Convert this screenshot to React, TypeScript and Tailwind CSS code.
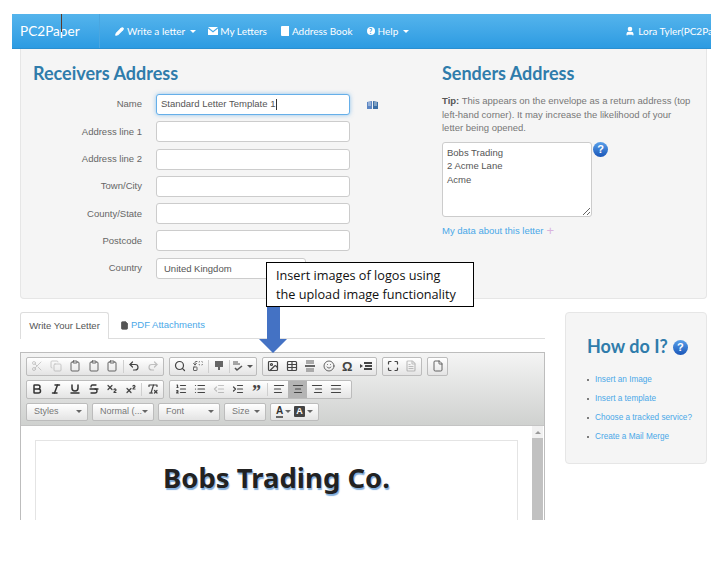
import React from 'react';
import {
  Pencil, User, Scissors, Copy, Clipboard, Undo2, Redo2, Search, Replace,
  Image, Table, Smile, Maximize, File, FileText,
  Bold, Italic, Underline, Strikethrough, Subscript, Superscript, RemoveFormatting,
  ListOrdered, List, IndentDecrease, IndentIncrease, AlignLeft, AlignCenter, AlignRight, AlignJustify,
} from 'lucide-react';

const Caret = ({ className = 'border-t-white' }: { className?: string }) => (
  <span className={`inline-block w-0 h-0 border-x-[3px] border-x-transparent border-t-[3px] ${className}`} />
);

function HelpDot({ className = '' }: { className?: string }) {
  return (
    <span className={`flex w-[15px] h-[15px] shrink-0 items-center justify-center rounded-full bg-gradient-to-b from-[#5aa0ea] to-[#1a56b8] text-[11px] font-bold leading-none text-white ${className}`}>
      ?
    </span>
  );
}

function Btn({ children, active, dim }: { children: React.ReactNode; active?: boolean; dim?: boolean }) {
  return (
    <span className={`flex h-full w-[19px] items-center justify-center ${active ? 'bg-[#b4b4b4]' : ''} ${dim ? 'opacity-30' : ''}`}>
      {children}
    </span>
  );
}

const Sep = () => <span className="mx-[1px] h-[13px] w-px bg-[#cfcfcf]" />;

function Group({ children, className = '' }: { children: React.ReactNode; className?: string }) {
  return (
    <div className={`flex h-full items-center rounded-[2px] border border-[#bcbcbc] bg-gradient-to-b from-white to-[#e4e4e4] px-[1px] ${className}`}>
      {children}
    </div>
  );
}

function Combo({ label, width }: { label: string; width: string }) {
  return (
    <div className={`flex h-full items-center justify-between rounded-[2px] border border-[#bcbcbc] bg-gradient-to-b from-white to-[#e4e4e4] pl-[7px] pr-[5px] text-[9px] text-[#777] ${width}`}>
      <span>{label}</span>
      <Caret className="border-t-[#666]" />
    </div>
  );
}

const ic = { size: 12, strokeWidth: 2.4, color: '#444' };
const icLight = { size: 12, strokeWidth: 1.8, color: '#555' };

function Toolbar() {
  return (
    <div className="flex h-[73px] flex-col gap-[4px] border-b border-[#c4c4c4] bg-gradient-to-b from-[#f4f4f4] to-[#cfd1cf] px-[5px] pt-[4px] pb-[4px]">
      <div className="flex h-[19px] gap-[5px]">
        <Group className="w-[138px]">
          <Btn dim><Scissors {...icLight} /></Btn>
          <Btn dim><Copy {...icLight} /></Btn>
          <Btn><Clipboard {...icLight} /></Btn>
          <Btn><Clipboard {...icLight} /></Btn>
          <Btn><Clipboard {...icLight} /></Btn>
          <Sep />
          <Btn><Undo2 {...ic} /></Btn>
          <Btn dim><Redo2 {...ic} /></Btn>
        </Group>
        <Group className="w-[88px]">
          <Btn><Search {...ic} /></Btn>
          <Btn><Replace {...icLight} /></Btn>
          <Sep />
          <Btn>
            <svg width="12" height="12" viewBox="0 0 12 12" fill="#666">
              <path d="M2 1h8v6H7v3H5V7H2z" />
            </svg>
          </Btn>
          <Sep />
          <span className="flex w-[26px] items-center justify-center gap-[2px]">
            <svg width="13" height="12" viewBox="0 0 13 12" fill="none" stroke="#555">
              <path d="M1 4h7M1 2h5" strokeWidth="1" />
              <path d="M3 8l2 2 5-4" strokeWidth="1.6" />
            </svg>
            <Caret className="border-t-[#555]" />
          </span>
        </Group>
        <Group className="w-[115px]">
          <Btn><Image {...ic} /></Btn>
          <Btn><Table {...ic} /></Btn>
          <Btn>
            <svg width="12" height="12" viewBox="0 0 12 12">
              <path d="M2 0h8v4H2zM2 8h8v4H2z" fill="#aaa" />
              <path d="M1 5h10v2H1z" fill="#666" />
            </svg>
          </Btn>
          <Btn><Smile {...icLight} /></Btn>
          <Btn><span className="text-[13px] font-bold leading-none text-[#444]">Ω</span></Btn>
          <Btn>
            <svg width="12" height="12" viewBox="0 0 12 12" fill="#444">
              <path d="M0 4l3 2-3 2zM4 2h8v2H4zM5 5h7v2H5zM4 8h8v2H4z" />
            </svg>
          </Btn>
        </Group>
        <Group className="w-[40px]">
          <Btn><Maximize {...ic} /></Btn>
          <Btn dim><FileText {...ic} /></Btn>
        </Group>
        <Group className="w-[21px]">
          <Btn><File {...icLight} /></Btn>
        </Group>
      </div>
      <div className="flex h-[19px] gap-[5px]">
        <Group className="w-[138px]">
          <Btn><Bold size={12} strokeWidth={3} color="#333" /></Btn>
          <Btn><Italic size={12} strokeWidth={3} color="#333" /></Btn>
          <Btn><Underline size={12} strokeWidth={3} color="#333" /></Btn>
          <Btn><Strikethrough size={12} strokeWidth={2.6} color="#333" /></Btn>
          <Btn><Subscript {...ic} /></Btn>
          <Btn><Superscript {...ic} /></Btn>
          <Sep />
          <Btn><RemoveFormatting {...ic} /></Btn>
        </Group>
        <Group className="w-[183px]">
          <Btn><ListOrdered {...ic} /></Btn>
          <Btn><List {...ic} /></Btn>
          <Btn dim><IndentDecrease {...ic} /></Btn>
          <Btn><IndentIncrease {...ic} /></Btn>
          <Btn><span className="mt-[5px] font-['Liberation_Serif',serif] text-[18px] font-bold leading-none text-[#444]">”</span></Btn>
          <Sep />
          <Btn><AlignLeft {...ic} /></Btn>
          <Btn active><AlignCenter {...ic} /></Btn>
          <Btn><AlignRight {...ic} /></Btn>
          <Btn><AlignJustify {...ic} /></Btn>
        </Group>
      </div>
      <div className="flex h-[19px] gap-[4px]">
        <Combo label="Styles" width="w-[62px]" />
        <Combo label="Normal (..." width="w-[62px]" />
        <Combo label="Font" width="w-[62px]" />
        <Combo label="Size" width="w-[42px]" />
        <Group className="w-[49px] justify-between px-[5px]">
          <span className="flex items-center gap-[2px]">
            <span className="border-b-2 border-[#666] text-[10px] font-bold leading-[10px] text-[#333]">A</span>
            <Caret className="border-t-[#666]" />
          </span>
          <span className="flex items-center gap-[2px]">
            <span className="flex h-[11px] w-[11px] items-center justify-center rounded-[1px] bg-[#444] text-[9px] font-bold text-white">A</span>
            <Caret className="border-t-[#666]" />
          </span>
        </Group>
      </div>
    </div>
  );
}

function Field({ label, value, width = 'w-[194px]' }: { label: string; value?: string; width?: string }) {
  return (
    <div className="flex h-[21px] items-center">
      <label className="w-[109px] text-right text-[9.5px] text-[#666]">{label}</label>
      <input
        readOnly
        value={value ?? ''}
        className={`ml-[14px] h-full rounded-[3px] border border-[#ccc] bg-white px-[7px] text-[9.5px] text-[#555] outline-none ${width}`}
      />
    </div>
  );
}

const headingCls = "font-['Lato',sans-serif] text-[18px] font-bold leading-[20px] text-[#2f7cab]";

export default function App() {
  return (
    <div className="relative h-[571px] w-[727px] overflow-hidden bg-white pt-[14px] font-['Liberation_Sans',Arial,sans-serif]">
      {/* navbar */}
      <nav className="relative z-10 ml-[12px] flex h-[35px] w-[699px] items-center overflow-hidden border-b border-[#2a8fd0] bg-gradient-to-b from-[#54b4ec] to-[#2b9be2] font-['Lato',sans-serif] text-[10px] text-white">
        <div className="flex h-full w-[88px] shrink-0 items-center border-r border-[#4aa6e0] pl-[8px] text-[13.6px]">PC2Paper</div>
        <div className="flex shrink-0 items-center gap-[3px] pl-[15px]">
          <Pencil size={9} strokeWidth={3} fill="white" /> Write a letter <Caret className="ml-[2px] border-t-white" />
        </div>
        <div className="flex shrink-0 items-center gap-[2px] pl-[12px]">
          <svg width="10" height="8" viewBox="0 0 10 8" fill="white">
            <path d="M0 0h10L5 4zM0 1.5V8h10V1.5L5 5.5z" />
          </svg>
          My Letters
        </div>
        <div className="flex shrink-0 items-center gap-[3px] pl-[14px]">
          <svg width="8" height="10" viewBox="0 0 8 10" fill="white">
            <path d="M1 0h7v10H1a1 1 0 0 1-1-1V1a1 1 0 0 1 1-1z" />
          </svg>
          Address Book
        </div>
        <div className="flex shrink-0 items-center gap-[3px] pl-[14px]">
          <span className="flex h-[8px] w-[8px] items-center justify-center rounded-full bg-white text-[7px] font-bold text-[#2b9be2]">?</span>
          Help <Caret className="ml-[2px] border-t-white" />
        </div>
        <div className="ml-[216px] flex shrink-0 items-center gap-[3px]">
          <User size={10} strokeWidth={3} fill="white" /> Lora Tyler(PC2Paper)
        </div>
      </nav>
      {/* text cursor left on the capture */}
      <span className="absolute left-[61px] top-[14px] z-20 h-[18px] w-px bg-[#5b3a2a]" />

      {/* address panel */}
      <section className="ml-[20px] flex h-[250px] w-[687px] rounded-b-[4px] border border-t-0 border-[#e6e6e6] bg-[#f5f5f5] pl-[12px] pt-[14px]">
        <div className="w-[409px]">
          <h2 className={headingCls}>Receivers Address</h2>
          <div className="mt-[11px] flex flex-col gap-[6.3px]">
            <div className="flex h-[21px] items-center">
              <label className="w-[109px] text-right text-[9.5px] text-[#666]">Name</label>
              <div className="ml-[14px] flex h-full w-[194px] items-center rounded-[3px] border border-[#66afe9] bg-white px-[4px] text-[9.5px] text-[#555] shadow-[0_0_4px_rgba(102,175,233,0.7)]">
                Standard Letter Template 1<span className="ml-px h-[11px] w-px bg-[#333]" />
              </div>
              <svg className="ml-[17px]" width="11" height="8" viewBox="0 0 11 8">
                <path d="M0 1l5 -1v8l-5 0z" fill="#5b86c4" />
                <path d="M6 0l5 1v7H6z" fill="#3a6ea5" />
                <path d="M1 2h3M7 2h3M1 4h3M7 4h3" stroke="#fff" strokeWidth="0.7" />
              </svg>
            </div>
            <Field label="Address line 1" />
            <Field label="Address line 2" />
            <Field label="Town/City" />
            <Field label="County/State" />
            <Field label="Postcode" />
            <Field label="Country" value="United Kingdom" width="w-[150px]" />
          </div>
        </div>
        <div className="w-[254px]">
          <h2 className={headingCls}>Senders Address</h2>
          <p className="mt-[11px] w-[250px] text-[9.5px] leading-[13.6px] text-[#777]">
            <b className="text-[#555]">Tip:</b> This appears on the envelope as a return address (top left-hand corner). It may increase the likelihood of your letter being opened.
          </p>
          <div className="mt-[7px] flex items-start gap-px">
            <textarea
              readOnly
              value={'Bobs Trading\n2 Acme Lane\nAcme'}
              className="h-[75px] w-[150px] rounded-[3px] border border-[#ccc] bg-white px-[4px] py-[3px] text-[9.5px] leading-[13.5px] text-[#555] outline-none"
            />
            <HelpDot />
          </div>
          <div className="mt-[7px] flex items-center gap-[3px] text-[9.5px] text-[#4aa8e8]">
            My data about this letter <span className="text-[13px] leading-none text-[#d9b3dd]">+</span>
          </div>
        </div>
      </section>

      {/* lower part */}
      <div className="ml-[20px] mt-[13px] flex w-[687px] items-start gap-[20px]">
        <div className="w-[525px]">
          <div className="flex h-[27px] items-end border-b border-[#ddd] text-[9.5px]">
            <div className="-mb-px flex h-[27px] w-[89px] items-center justify-center rounded-t-[3px] border border-b-0 border-[#ddd] bg-white text-[#555]">
              Write Your Letter
            </div>
            <div className="ml-[11px] flex h-[26px] items-center gap-[2px] text-[#4aa8e8]">
              <File size={9} fill="#555" color="#555" /> PDF Attachments
            </div>
          </div>
          <div className="mt-[13px] h-[168px] overflow-hidden border-x border-t border-[#bdbdbd]">
            <Toolbar />
            <div className="flex h-[95px] bg-white">
              <div className="flex-1 pl-[14px] pr-[14px] pt-[14px]">
                <div className="h-[100px] border border-[#e4e4e4] pt-[17px] text-center font-['Noto_Sans',sans-serif] text-[27.5px] font-bold leading-[40px] text-[#222] [text-shadow:1px_2px_1px_#84afdc]">
                  Bobs Trading Co.
                </div>
              </div>
              <div className="flex w-[11px] flex-col items-center bg-[#f1f1f1]">
                <span className="mt-[5px] h-0 w-0 border-x-[3px] border-b-[3px] border-x-transparent border-b-[#999]" />
                <span className="mt-[4px] w-full flex-1 bg-[#c1c1c1]" />
              </div>
              <div className="w-px" />
            </div>
          </div>
        </div>

        <aside className="h-[152px] w-[142px] rounded-[4px] border border-[#e6e6e6] bg-[#f5f5f5] pl-[21px] pt-[23px]">
          <div className="flex items-center gap-[5px]">
            <h2 className={headingCls}>How do I?</h2>
            <HelpDot className="mt-[2px]" />
          </div>
          <ul className="mt-[18px] flex flex-col gap-[8px] text-[8.2px] leading-[11px] text-[#4aa8e8]">
            {['Insert an Image', 'Insert a template', 'Choose a tracked service?', 'Create a Mail Merge'].map((t) => (
              <li key={t} className="flex items-center gap-[6px]">
                <span className="h-[2px] w-[2px] rounded-full bg-[#555]" />
                {t}
              </li>
            ))}
          </ul>
        </aside>
      </div>

      {/* annotation over the page */}
      <div className="absolute left-[266px] top-[262px] z-20 h-[45px] w-[208px] border border-black bg-white pl-[9px] pt-[3px] font-['Open_Sans',sans-serif] text-[12.7px] leading-[19px] text-[#111]">
        Insert images of logos using<br />the upload image functionality
      </div>
      <svg className="absolute left-[259px] top-[307px] z-20" width="28" height="47" viewBox="0 0 28 47">
        <path d="M8 0h13v32h7L14 46 0 32h8z" fill="#4472c4" />
      </svg>
    </div>
  );
}
